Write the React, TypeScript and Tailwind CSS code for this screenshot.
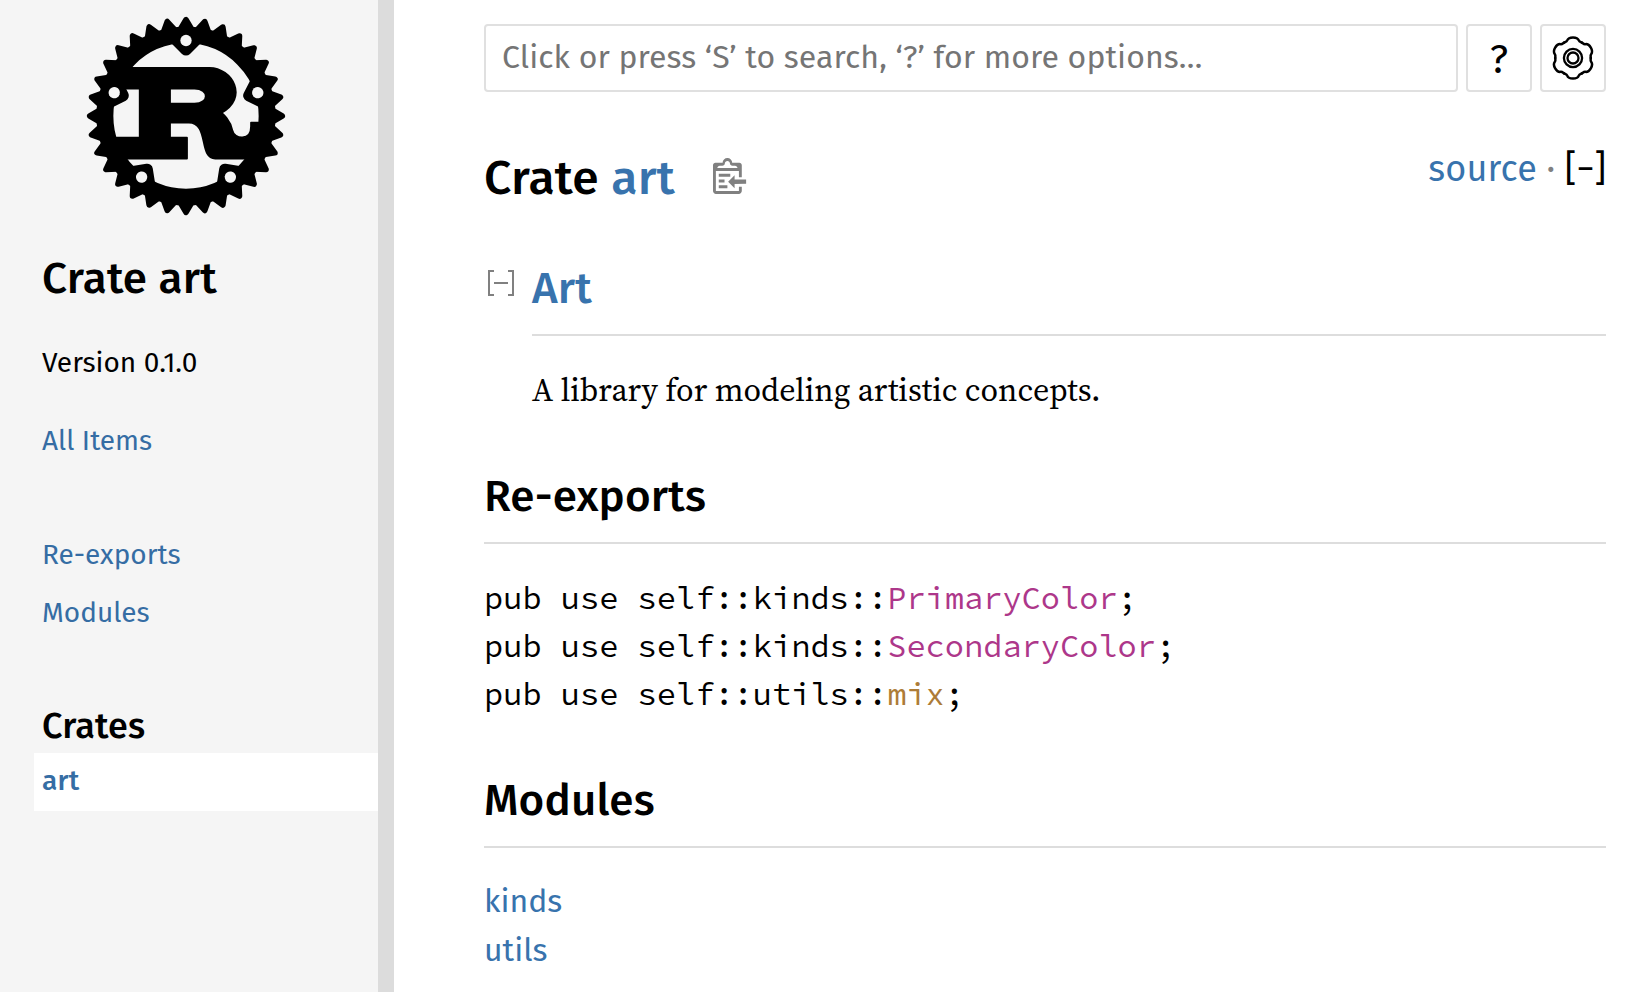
import React from "react";

const SANS = "font-['Fira_Sans','Noto_Sans',sans-serif]";
const SERIF = "font-['Source_Serif_4','Liberation_Serif',serif]";
const MONO = "font-['Source_Code_Pro','DejaVu_Sans_Mono',monospace]";

const COG_ANGLES = Array.from({ length: 32 }, (_, i) => i * 11.25);
const MOUNT_ANGLES = [0, 72, 144, 216, 288];
const LOBE_ANGLES = [0, 60, 120, 180, 240, 300];

function RustLogo() {
  return (
    <svg className="size-[200px]" viewBox="0 0 106 106">
      <mask id="holes">
        <rect x="-60" y="-60" width="120" height="120" fill="white" />
        {MOUNT_ANGLES.map((a) => (
          <circle key={a} cy="-40" r="3" transform={`rotate(${a})`} />
        ))}
      </mask>
      <g transform="translate(53, 53)">
        <path
          transform="translate(0.5, 0.5)"
          stroke="black"
          strokeWidth="1"
          strokeLinejoin="round"
          d="M -9,-15 H 4 C 12,-15 12,-7 4,-7 H -9 Z M -40,22 H 0 V 11 H -9 V 3 H 1 C 12,3 6,22 15,22 H 40 V 3 H 34 V 5 C 34,13 25,12 24,7 C 23,2 19,-2 18,-2 C 33,-10 24,-26 12,-26 H -35 V -15 H -25 V 11 H -40 Z"
        />
        <g mask="url(#holes)">
          <circle r="43" fill="none" stroke="black" strokeWidth="9" />
          {COG_ANGLES.map((a) => (
            <polygon key={a} stroke="black" strokeWidth="3" strokeLinejoin="round" points="46,3 51,0 46,-3" transform={`rotate(${a})`} />
          ))}
          {MOUNT_ANGLES.map((a) => (
            <polygon key={a} stroke="black" strokeWidth="6" strokeLinejoin="round" points="-7,-42 0,-35 7,-42" transform={`rotate(${a})`} />
          ))}
        </g>
      </g>
    </svg>
  );
}

function GearIcon() {
  return (
    <svg className="size-12" viewBox="-24 -24 48 48" fill="none" stroke="black" strokeLinecap="round">
      {LOBE_ANGLES.map((a) => (
        <path
          key={a}
          strokeWidth="2.5"
          transform={`rotate(${a})`}
          d="M-8.9-15.4C-7.6-16.1-6.4-16.1-5.8-17.6C-4.9-20-3-20.6 0-20.6C3-20.6 4.9-20 5.8-17.6C6.4-16.1 7.6-16.1 8.9-15.4"
        />
      ))}
      <circle r="9.1" strokeWidth="2.3" />
      <circle r="5.5" strokeWidth="2.3" />
    </svg>
  );
}

function ClipboardIcon() {
  return (
    <svg className="h-9 w-[34.56px]" viewBox="0 0 24 25" fill="#808080">
      <path d="M18 20h2v3c0 1-1 2-2 2H2c-.998 0-2-1-2-2V5c0-.911.755-1.667 1.667-1.667h5A3.323 3.323 0 0110 0a3.323 3.323 0 013.333 3.333h5C19.245 3.333 20 4.09 20 5v8.333h-2V9H2v14h16v-3zM3 7h14c0-.911-.793-1.667-1.75-1.667H13.5c-.957 0-1.75-.755-1.75-1.666C11.75 2.755 10.957 2 10 2s-1.75.755-1.75 1.667c0 .911-.793 1.666-1.75 1.666H4.75C3.793 5.333 3 6.09 3 7z" />
      <path d="M4 19h6v2H4zM12 11H4v2h8zM4 17h4v-2H4zM15 15v-3l-4.5 4.5L15 21v-3l8.027-.032L23 15z" />
    </svg>
  );
}

function CollapseIcon() {
  return (
    <svg className="size-[34px] shrink-0" viewBox="0 0 17 17" shapeRendering="crispEdges" stroke="#808080" fill="none">
      <path d="M5 2.5H2.5v12H5m7-12h2.5v12H12m-7-6h7" />
    </svg>
  );
}

function SideLink({ children, className = "" }: { children: React.ReactNode; className?: string }) {
  return (
    <a className={`ml-[34px] block h-[58px] pt-[7px] pl-2 text-[28px] leading-[42px] text-[#356da4] ${className}`}>{children}</a>
  );
}

function SectionHeading({ children, className = "" }: { children: React.ReactNode; className?: string }) {
  return (
    <h2 className={`h-[78px] border-b-2 border-[#dddddd] text-[44px] leading-[62px] font-medium tracking-[0.15px] ${SANS} ${className}`}>{children}</h2>
  );
}

function ReExport({ path, name, color }: { path: string; name: string; color: string }) {
  return (
    <li className="whitespace-pre">
      {`pub use self::${path}::`}
      <a className={color}>{name}</a>;
    </li>
  );
}

export default function App() {
  return (
    <div className={`flex h-[992px] w-[1632px] overflow-hidden bg-white text-black ${SANS}`}>
      <nav className="flex w-[378px] shrink-0 flex-col bg-[#f5f5f5]">
        <div className="flex h-[232px] justify-center pt-4 pr-[6px]">
          <RustLogo />
        </div>
        <h2 className="mt-[19px] pl-[42px] text-[44px] leading-[56px] font-medium tracking-[0.22px]">Crate art</h2>
        <div className="mt-[35px] pl-[42px] text-[28px] leading-[42px]">Version 0.1.0</div>
        <SideLink className="mt-[29px]">All Items</SideLink>
        <SideLink className="mt-14">Re-exports</SideLink>
        <SideLink>Modules</SideLink>
        <h3 className="mt-[58px] h-[52px] pl-[42px] text-[36px] leading-[50px] font-medium tracking-[0.15px]">Crates</h3>
        <SideLink className="bg-white font-medium tracking-[0.2px]">art</SideLink>
      </nav>
      <div className="w-4 shrink-0 bg-[#dcdcdc]" />

      <main className="flex flex-1 flex-col pt-6 pr-[26px] pl-[90px]">
        <div className="flex h-[68px] shrink-0 gap-2">
          <input
            className="min-w-0 flex-1 rounded-[4px] border-2 border-[#e0e0e0] px-4 pb-[3px] text-[32px] tracking-[0.08px] placeholder:text-[#757575] placeholder:opacity-100"
            placeholder="Click or press ‘S’ to search, ‘?’ for more options…"
          />
          <button className="w-[66px] rounded-[4px] border-2 border-[#e0e0e0] pt-[3px] text-[40px] leading-none">?</button>
          <button className="flex w-[66px] items-center justify-center rounded-[4px] border-2 border-[#e0e0e0]">
            <GearIcon />
          </button>
        </div>

        <div className="mt-[56px] flex h-[64px] items-start justify-between">
          <h1 className="flex items-start text-[48px] leading-[60px] font-medium tracking-[0.26px] whitespace-pre">
            Crate <a className="text-[#3873ad]">art</a>
            <span className="mt-[10px] ml-[38px]">
              <ClipboardIcon />
            </span>
          </h1>
          <div className="text-[36px] leading-[42px] text-[#808080]">
            <a className="tracking-[0.2px] text-[#3873ad]">source</a> · <button className="text-black">[−]</button>
          </div>
        </div>

        <section className="mt-[46px] flex">
          <div className="mt-2 w-12">
            <CollapseIcon />
          </div>
          <div className="flex-1">
            <SectionHeading>
              <a className="text-[#3873ad]">Art</a>
            </SectionHeading>
            <p className={`mt-[30px] text-[32px] leading-[48px] ${SERIF}`}>A library for modeling artistic concepts.</p>
          </div>
        </section>

        <SectionHeading className="mt-[52px]">Re-exports</SectionHeading>
        <ul className={`mt-[30px] text-[32px] leading-[48px] ${MONO}`}>
          <ReExport path="kinds" name="PrimaryColor" color="text-[#ad378a]" />
          <ReExport path="kinds" name="SecondaryColor" color="text-[#ad378a]" />
          <ReExport path="utils" name="mix" color="text-[#ad7c37]" />
        </ul>

        <SectionHeading className="mt-[52px]">Modules</SectionHeading>
        <ul className="mt-[29px] text-[32px] leading-[49px] text-[#3873ad]">
          <li>kinds</li>
          <li>utils</li>
        </ul>
      </main>
    </div>
  );
}
